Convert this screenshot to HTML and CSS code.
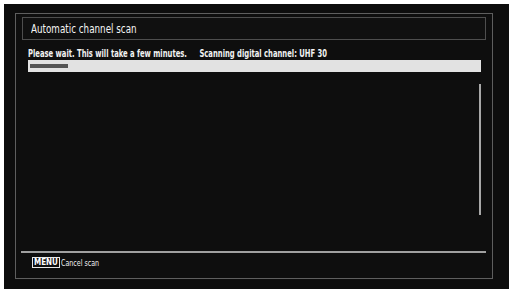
FILE: index.html
```html
<!DOCTYPE html>
<html>
<head>
<meta charset="utf-8">
<link rel="stylesheet" href="styles.css">
</head>
<body>
<div class="screen">
  <div class="frame">
    <div class="title-box"><span class="title narrow">Automatic channel scan</span></div>
    <div class="status">
      <span class="narrow status-text">Please wait. This will take a few minutes.<span class="scanning">Scanning digital channel: UHF 30</span></span>
    </div>
    <div class="progress"><div class="progress-fill" style="width: 38px"></div></div>
    <div class="list">
      <div class="scrollbar"></div>
    </div>
    <div class="separator"></div>
    <div class="footer">
      <span class="key">MENU</span>
      <span class="hint narrow">Cancel scan</span>
    </div>
  </div>
</div>
</body>
</html>
```
FILE: styles.css
```css
html, body {
  margin: 0;
  padding: 0;
  background: #ffffff;
}
body {
  width: 509px;
  height: 289px;
  overflow: hidden;
}
.screen {
  margin: 4px 0 0 4px;
  width: 505px;
  height: 285px;
  background: #0d0d0d;
  padding: 9px 0 0 11px;
  box-sizing: border-box;
  font-family: "DejaVu Sans Condensed", "DejaVu Sans", sans-serif;
  color: #f2f2f2;
}
.narrow {
  display: inline-block;
  transform: scaleX(0.78);
  transform-origin: left center;
  white-space: nowrap;
}
.frame {
  width: 478px;
  height: 266px;
  box-sizing: border-box;
  border: 1px solid #5e5e5e;
  background: #0e0e0e;
  display: flex;
  flex-direction: column;
}
.title-box {
  margin: 3px 0 0 6px;
  width: 464px;
  height: 23px;
  box-sizing: border-box;
  border: 1px solid #4e4e4e;
  background: #101010;
  display: flex;
  align-items: center;
  padding-left: 8px;
}
.title {
  font-size: 12.5px;
  color: #f4f4f4;
}
.status {
  margin: 6px 0 0 12px;
  height: 14px;
  font-size: 10.3px;
  font-weight: bold;
  line-height: 14px;
  white-space: nowrap;
  display: flex;
}
.status-text {
  transform: scaleX(0.735);
}
.scanning {
  margin-left: 17px;
}
.progress {
  margin-left: 12px;
  width: 453px;
  height: 12px;
  background: #e2e2e2;
  display: flex;
  align-items: center;
  padding-left: 2px;
  box-sizing: border-box;
}
.progress-fill {
  height: 4px;
  background: #555555;
}
.list {
  height: 179px;
  display: flex;
  justify-content: flex-end;
  padding-right: 11px;
}
.scrollbar {
  margin-top: 12px;
  width: 2px;
  height: 131px;
  background: #a8a8a8;
}
.separator {
  margin-left: 5px;
  width: 465px;
  height: 2px;
  background: #a0a0a0;
}
.footer {
  margin: 4px 0 0 16px;
  display: flex;
  align-items: center;
  gap: 1px;
}
.key {
  border: 1px solid #e8e8e8;
  font-size: 8px;
  font-weight: bold;
  line-height: 9px;
  padding: 0 1px;
  color: #ffffff;
}
.hint {
  font-size: 9px;
  color: #f0f0f0;
}
```
